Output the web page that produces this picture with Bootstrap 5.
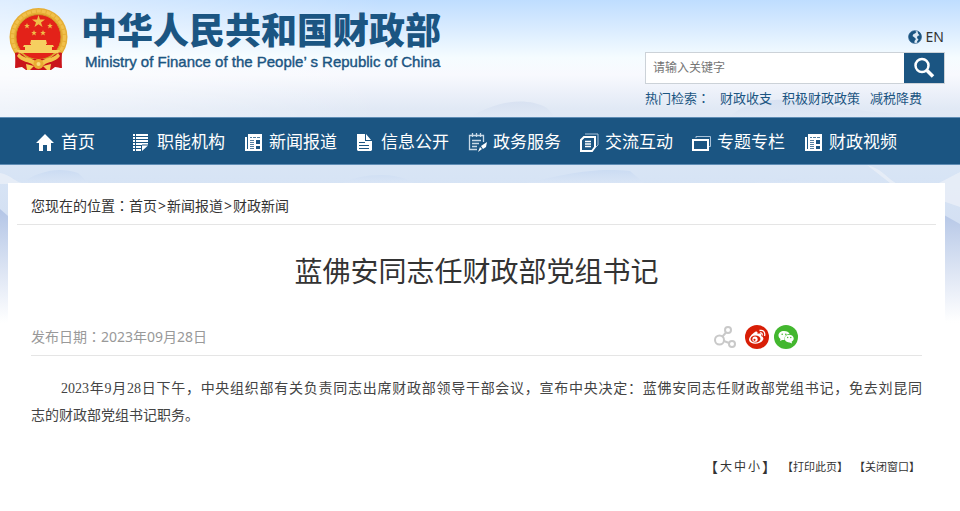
<!DOCTYPE html>
<html lang="zh-CN">
<head>
<meta charset="utf-8">
<meta name="viewport" content="width=device-width, initial-scale=1">
<title>蓝佛安同志任财政部党组书记</title>
<link href="https://cdn.jsdelivr.net/npm/bootstrap@5.3.0/dist/css/bootstrap.min.css" rel="stylesheet">
<style>
:root { --mof: #1b5582; }
body { font-family: "Noto Sans", "Noto Sans CJK SC", sans-serif; font-size: 14px; line-height: 20px; color: #333; background: #fff; min-height: 100vh; }
a { color: inherit; text-decoration: none; }
.sky { position: absolute; top: 0; left: 0; width: 100%; height: 340px; z-index: -1; }
.site-head { min-height: 117px; padding: 7px 15px 0 8px; }
.emblem { width: 61px; height: 65px; }
.names { padding: 2px 0 0 12px; }
.site-name { font-family: "Liberation Sans", "Noto Sans CJK SC", sans-serif; font-weight: 900; font-size: 36px; line-height: 46px; color: var(--mof); }
.site-sub { font-family: "Liberation Sans", sans-serif; font-size: 15px; line-height: 14px; color: var(--mof); -webkit-text-stroke: 0.4px var(--mof); padding-left: 4px; }
.tools { width: 300px; padding-top: 20px; }
.lang { line-height: 20px; margin-bottom: 5px; padding-right: 1px; }
.search { border: 1px solid #ccd2d8; height: 32px; background: #fff; }
.search .form-control { font-size: 12px; padding: 0 7px; color: #333; }
.search .form-control::placeholder { color: #757575; }
.search .btn { width: 40px; background: var(--mof); }
.hot { font-size: 13px; line-height: 20px; color: var(--mof); padding-top: 4px; gap: 10px; }
.colon { font-family: "Noto Sans CJK TC", sans-serif; line-height: 1; }
.main-nav { background: var(--mof); border-top: 1px solid #5f8db5; border-bottom: 1px solid #5f8db5; height: 48px; padding: 2px 0 0 36px; color: #fff; }
.main-nav .nav-link { font-size: 17px; line-height: 24px; padding: 0; width: 112px; gap: 6px; color: #fff; }
.main-nav .home-link { width: 96px; }
.main-nav svg { width: 19px; height: 19px; flex: none; }
.sheet { background: #fff; margin: 18px 15px 0 8px; padding: 0 9px 30px; }
.crumbs { padding: 13px 14px 8px; border-bottom: 1px solid #e5e5e5; }
.crumbs b { font-weight: 400; margin: 0 1px; }
.article { padding: 0 14px; }
.headline { font-size: 28px; line-height: 40px; font-weight: 400; margin: 26px 0 34px; }
.meta { color: #999; border-bottom: 1px solid #e5e5e5; padding-bottom: 6px; }
.share { gap: 5px; margin-right: 124px; }
.story { font-family: "Liberation Serif", "Noto Sans CJK SC", serif; line-height: 27px; margin: 19px 0 28px; color: #444; }
.story .full-line { text-align-last: justify; padding-left: 30px; }
.acts { font-size: 11px; padding-right: 2px; gap: 6px; }
.sizes { gap: 2px; font-size: 14px; }
.acts .btn { font-size: 11px; line-height: 20px; padding: 0; border: 0; border-radius: 0; color: #333; }
.sizes .btn { font-size: 12px; }
</style>
<script src="https://cdn.jsdelivr.net/npm/bootstrap@5.3.0/dist/js/bootstrap.bundle.min.js"></script>
</head>
<body class="position-relative">
<svg class="sky" viewBox="0 0 960 340" preserveAspectRatio="none" aria-hidden="true">
  <defs>
    <linearGradient id="air" x1="0" y1="0" x2="0" y2="1">
      <stop offset="0" stop-color="#bfddff"/><stop offset=".08" stop-color="#d8ebff"/><stop offset=".17" stop-color="#f5fcff"/>
      <stop offset=".22" stop-color="#f8f9fe"/><stop offset=".32" stop-color="#e1e9f5"/><stop offset=".52" stop-color="#d7e4f5"/>
      <stop offset=".68" stop-color="#d3dff2"/><stop offset=".95" stop-color="#fff"/>
    </linearGradient>
    <linearGradient id="haze" x1="0" y1="0" x2="1" y2="0">
      <stop offset="0" stop-color="#fff" stop-opacity=".5"/><stop offset=".4" stop-color="#fff" stop-opacity="0"/>
    </linearGradient>
    <linearGradient id="ridge" x1="0" y1="0" x2="0" y2="1"><stop offset="0" stop-color="#b3c5e6"/><stop offset="1" stop-color="#fff"/></linearGradient>
    <linearGradient id="hill" x1="0" y1="0" x2="0" y2="1"><stop offset="0" stop-color="#c3d6f1"/><stop offset="1" stop-color="#dce7f6"/></linearGradient>
    <linearGradient id="far" x1="0" y1="0" x2="0" y2="1"><stop offset="0" stop-color="#c9d6ec"/><stop offset="1" stop-color="#e1e9f5"/></linearGradient>
  </defs>
  <path fill="url(#air)" d="M0 0h960v340H0z"/>
  <path fill="url(#haze)" d="M0 0h960v117H0z"/>
  <path fill="url(#far)" opacity=".5" d="M470 117c25-15 55-21 77-9l8 9zM730 117c12-14 40-20 70-16 30 4 50 10 90 12l30 4z"/>
  <path fill="url(#hill)" opacity=".6" d="M20 184c20-14 40-17 58-11l12 11zM340 184c20-10 50-12 68-4l8 4zM520 184c45-9 70-17 110-13l15 13zM750 184c20-6 50-6 80 0z"/>
  <path fill="#edf1f8" opacity=".7" d="M0 173c12 2 14 10 28 11H0zM867 165c14 3 20 13 30 19h40l23-12v35l-70-24z"/>
  <path fill="url(#ridge)" d="M0 209l8 7v104H0zM944 215l16 9v98h-16z"/>
</svg>

<header class="site-head d-flex justify-content-between align-items-start">
  <a href="#" class="d-flex align-items-start">
    <svg class="emblem" viewBox="0 0 61 65" aria-hidden="true">
      <path fill="#c9151b" d="M8 46L7 61l7-1 4 3h25l4-3 7 1-1-15z"/>
      <circle cx="30.500" cy="30" r="29" fill="#e6ae35"/>
      <circle cx="30.500" cy="30" r="26" fill="none" stroke="#f1c04c" stroke-width="3" stroke-dasharray="4 1"/>
      <circle cx="30.500" cy="30" r="22.500" fill="#e32219" stroke="#cf9428"/>
      <path fill="#f0bd48" d="M30.500 8l1.500 4.500h5l-4 3 1.500 4.600-4-2.800-4 2.800 1.500-4.600-4-3h5zM19 16l.8 2h2l-1.600 1.300.6 2.100-1.800-1.200-1.800 1.200.6-2.100-1.600-1.300h2zM42 16l.8 2h2l-1.600 1.300.6 2.100-1.800-1.200-1.800 1.200.6-2.100-1.600-1.300h2zM26 23l.8 2h2l-1.600 1.300.6 2.100-1.800-1.200-1.800 1.200.6-2.100-1.600-1.300h2zM35 23l.8 2h2l-1.600 1.300.6 2.100-1.800-1.200-1.800 1.200.6-2.100-1.600-1.300h2z"/>
      <path fill="#f6cf60" d="M23 33h15l1 4h-1v1h7l1 2h-2v3h8l-2 3H11l-2-3h8v-3h-2l1-2h7v-1h-1z"/>
      <path fill="#c9151b" d="M7 46c6-2 8 3 13 6h21c5-3 8-8 13-6l-1 15-8-3-6 5H22l-6-5-8 3z"/>
      <path fill="#f3c44c" d="M11 46c6 7 11 3 19.500 10C39 49 44 53 50 46l2 3c-5 7-12 5-16 9-4 3-7 3-11 0-4-4-11-2-16-9z"/>
      <circle cx="30.500" cy="57" r="5" fill="#e9ac32"/><circle cx="30.500" cy="57" r="2" fill="#f9dc7d"/>
      <path fill="#f7cf59" d="M18 57l8 2-4 4h-3zM43 57l-8 2 4 4h3z"/>
    </svg>
    <div class="names">
      <div class="site-name text-nowrap">中华人民共和国财政部</div>
      <div class="site-sub text-nowrap">Ministry of Finance of the People’ s Republic of China</div>
    </div>
  </a>
  <div class="tools">
    <div class="lang d-flex justify-content-end align-items-center gap-1">
      <svg width="14" height="14" viewBox="0 0 14 14" aria-hidden="true"><circle cx="7" cy="7" r="6.500" fill="#dce9f5" stroke="#6f94b6"/><path fill="#1b5582" d="M.8 8C0 4 3 .8 7 .7L8.500 2 7 3.500 5.500 4 4.500 6 6.500 7.500 8 9 6.500 11v2.200C3 13 1.200 11 .8 8zM9.500 1c3 1 4.500 4 3.800 7-.5 2-1.800 4-4 5L9 11.500l1.500-2L9 8l.5-2 2-.8L10 3.500z"/></svg>
      <a href="#">EN</a>
    </div>
    <form class="search d-flex" role="search">
      <input type="text" class="form-control border-0 rounded-0 bg-white" placeholder="请输入关键字" aria-label="请输入关键字">
      <button type="button" class="btn p-0 border-0 rounded-0 flex-shrink-0 d-flex align-items-center justify-content-center" aria-label="搜索">
        <svg width="22" height="22" viewBox="0 0 22 22" fill="none" stroke="#fff" aria-hidden="true"><circle cx="9" cy="8.500" r="6.500" stroke-width="2.500"/><path stroke-width="3.500" d="M14 13.500l6 6"/></svg>
      </button>
    </form>
    <div class="hot d-flex text-nowrap"><span>热门检索<span class="colon" lang="zh-Hant">：</span></span><a href="#">财政收支</a><a href="#">积极财政政策</a><a href="#">减税降费</a></div>
  </div>
</header>

<nav class="main-nav nav flex-nowrap align-items-center text-nowrap">
  <a class="nav-link home-link d-flex align-items-center" href="#"><svg viewBox="0 0 19 19" fill="#fff"><path d="M9 1L0 10h3v8h4v-6h4v6h4v-8h3z"/></svg>首页</a>
  <a class="nav-link d-flex align-items-center" href="#"><svg viewBox="0 0 19 19" fill="#fff"><path d="M1 1h2v2H1zm3 0h12v2H4zM1 4h2v2H1zm3 0h12v2H4zM1 7h2v2H1zm3 0h12v2H4zM1 10h2v2H1zm3 0h12v1.500H10v.5H4zM1 13h2v2H1zm3 0h5v2H4zM1 16h2v2H1zm3 0h5v2H4zM10 12.500h6L10 18z"/></svg>职能机构</a>
  <a class="nav-link d-flex align-items-center" href="#"><svg viewBox="0 0 19 19"><path fill="#fff" d="M4 1h14v17H1V4h2v12h1z"/><path stroke="#1b5582" stroke-opacity=".75" d="M6 4.500h2M9 4.500h3M13 4.500h3M6 7.500h4M6 9.500h4M6 11.500h4M6 13.500h4M6 15.500h4"/><path fill="#1b5582" d="M12 7h4v4h-4zM12 13h4v3h-4z"/></svg>新闻报道</a>
  <a class="nav-link d-flex align-items-center" href="#"><svg viewBox="0 0 19 19"><path fill="#fff" d="M1 1h8v7h7v9l-1 1H2l-1-1zM10 1l5 6h-5z"/><path stroke="#1b5582" d="M3 9.500h6M3 12.500h10M3 15.500h10"/></svg>信息公开</a>
  <a class="nav-link d-flex align-items-center" href="#"><svg viewBox="0 0 19 19" fill="none" stroke="#c8d9e7"><path d="M9 16.500H1.500v-14h14V9M4.500 0v4M8.500 0v4M12.500 0v4M4 7.500h9M4 10.500h7M4 13.500h5" stroke-width="1.300"/><path fill="#fff" stroke="none" d="M19 9l-1 5-3 2-2-3zM12 14l2 2-4 3z"/></svg>政务服务</a>
  <a class="nav-link d-flex align-items-center" href="#"><svg viewBox="0 0 19 19" fill="none" stroke="#fff"><path stroke="#a8c1d8" d="M5 1h13v11l-2 2"/><path stroke-width="2" d="M4 4h11v10l-3 4H1V7z"/><path stroke-width="1.300" d="M5 8.500h6M5 11h6M5 13.500h6"/></svg>交流互动</a>
  <a class="nav-link d-flex align-items-center" href="#"><svg viewBox="0 0 19 19" fill="none" stroke="#fff"><path stroke="#a8c1d8" d="M4 5V3.500h14.500v10H17"/><path stroke-width="2" d="M1 7h15v10H1z"/></svg>专题专栏</a>
  <a class="nav-link d-flex align-items-center" href="#"><svg viewBox="0 0 19 19"><path fill="#fff" d="M4 1h14v17H1V4h2v12h1z"/><path stroke="#1b5582" stroke-opacity=".75" d="M6 4.500h2M9 4.500h3M13 4.500h3M6 7.500h4M6 9.500h4M6 11.500h4M6 13.500h4M6 15.500h4"/><path fill="#1b5582" d="M12 7h4v4h-4zM12 13h4v3h-4z"/></svg>财政视频</a>
</nav>

<main class="sheet">
  <div class="crumbs">您现在的位置<span class="colon" lang="zh-Hant">：</span><a href="#">首页</a><b>&gt;</b><a href="#">新闻报道</a><b>&gt;</b><a href="#">财政新闻</a></div>
  <article class="article">
    <h1 class="headline text-center">蓝佛安同志任财政部党组书记</h1>
    <div class="meta d-flex justify-content-between align-items-center">
      <span>发布日期<span class="colon" lang="zh-Hant">：</span>2023年09月28日</span>
      <div class="share d-flex align-items-center">
        <svg class="me-1" width="22" height="22" viewBox="0 0 22 22" fill="none" stroke="#c9c9c9" stroke-width="2" aria-hidden="true"><circle cx="5.500" cy="14" r="4.500"/><circle cx="14" cy="4" r="3"/><circle cx="18" cy="18" r="3"/><path d="M8.500 10.500L12 6.500M10 15l5 2"/></svg>
        <a href="#" class="d-flex" aria-label="微博"><svg width="24" height="24" viewBox="0 0 24 24"><circle cx="12" cy="12" r="12" fill="#d81e06"/><path fill="#fff" d="M10 7c2-1 3 0 2.500 2 3-1 4.500 0 3.500 2 2 .6 3 2 2 4-3 5-13 5-14 0 0-3 3-6 6-8z"/><ellipse cx="10.500" cy="14" rx="5" ry="3.500" fill="#d81e06"/><circle cx="10" cy="14.200" r="2.600" fill="#fff"/><circle cx="9.500" cy="14.800" r="1.100" fill="#d81e06"/><path fill="none" stroke="#fff" stroke-width="1.300" d="M14.500 5.500c4-1 6 2 5 5.500M15 8c2-.3 2.500.8 2 2.500"/></svg></a>
        <a href="#" class="d-flex" aria-label="微信"><svg width="24" height="24" viewBox="0 0 24 24"><circle cx="12" cy="12" r="12" fill="#43b72f"/><path fill="#fff" d="M10 6c-3.300 0-5.500 2-5.500 4.500 0 1.500.8 2.700 2 3.500L6 16l2.200-1.100 2.300.2C10 11 12.500 9 15.600 9 15 7.300 12.800 6 10 6z"/><path fill="#fff" d="M15.200 9.700c-2.700 0-4.600 1.700-4.600 3.900 0 2.300 2.200 4 5 3.800l2.500 1-.5-1.700c1.500-.8 2.100-1.900 2.100-3.100 0-2.200-2-3.900-4.500-3.900z"/><g fill="#43b72f"><circle cx="8.200" cy="9.200" r=".8"/><circle cx="11.800" cy="9.200" r=".8"/><circle cx="13.700" cy="12.500" r=".7"/><circle cx="16.800" cy="12.500" r=".7"/></g></svg></a>
      </div>
    </div>
    <p class="story"><span class="full-line d-block">2023年9月28日下午，中央组织部有关负责同志出席财政部领导干部会议，宣布中央决定：蓝佛安同志任财政部党组书记，免去刘昆同</span><span class="d-block">志的财政部党组书记职务。</span></p>
    <div class="acts d-flex justify-content-end align-items-center text-nowrap">
      <div class="sizes d-flex align-items-center"><span>【</span><button type="button" class="btn">大</button><button type="button" class="btn">中</button><button type="button" class="btn">小</button><span>】</span></div>
      <button type="button" class="btn">【打印此页】</button>
      <button type="button" class="btn">【关闭窗口】</button>
    </div>
  </article>
</main>
</body>
</html>
